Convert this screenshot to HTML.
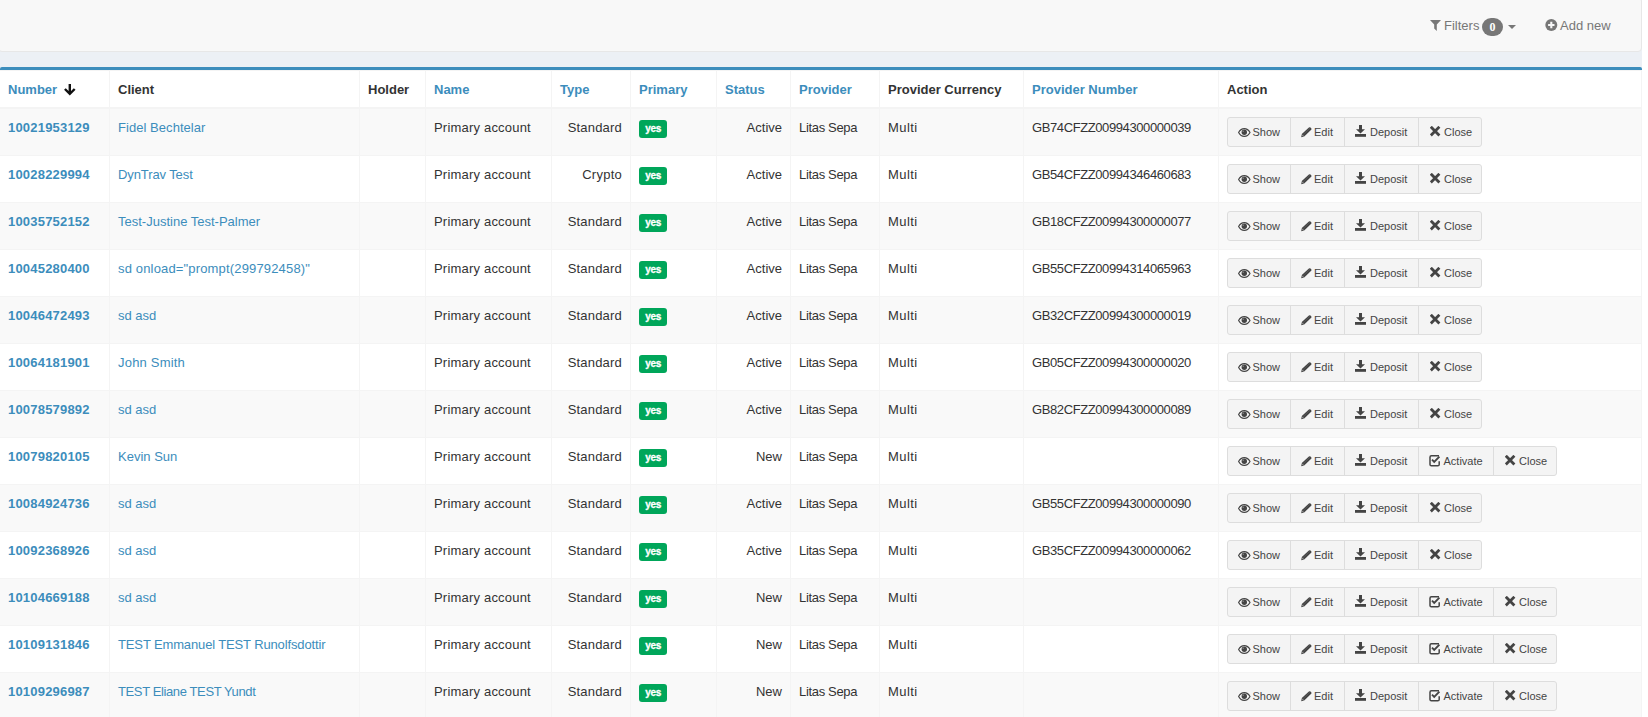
<!DOCTYPE html>
<html><head><meta charset="utf-8"><style>
*{box-sizing:border-box}
html,body{margin:0;padding:0}
body{width:1648px;height:717px;overflow:hidden;position:relative;background:#fff;font-family:"Liberation Sans",sans-serif;font-size:13px;color:#333}
.page{position:absolute;left:0;top:0;width:1642px;height:717px;background:#ecf0f5}
.nav{position:absolute;left:-2px;top:-3px;width:1644px;height:55px;background:#f8f8f8;border:1px solid #e7e7e7;border-radius:4px}
.nl{position:absolute;height:20px;line-height:20px;color:#777;font-size:13px;white-space:nowrap}
.badge{position:absolute;background:#777;color:#fff;border-radius:9px;font-family:"Liberation Serif",serif;font-weight:bold;font-size:12px;text-align:center}
.box{position:absolute;left:0;top:67px;width:1642px;height:660px;background:#fff;border-top:3px solid #3c8dbc;border-radius:2px}
table{position:absolute;left:0;top:70px;border-collapse:separate;border-spacing:0;table-layout:fixed;width:1642px}
td,th{padding:9px 8px 7px;line-height:20px;vertical-align:top;text-align:left;border-right:1px solid #f4f4f4;border-bottom:1px solid #f4f4f4;white-space:nowrap;overflow:hidden}
th{height:39px;border-top:1px solid #f4f4f4;border-bottom:2px solid #f4f4f4;padding-top:9px;padding-bottom:7px;font-weight:bold;font-size:13px}
tr.r td{height:47px}
tr.odd td{background:#f9f9f9}
a{color:#3c8dbc;text-decoration:none}
td.num a{font-weight:bold;letter-spacing:0.2px}
td.pn{letter-spacing:-0.4px}
td.act{padding-top:8px;padding-bottom:8px}
.tr{text-align:right}
.lbl{display:inline-block;vertical-align:top;background:#00a65a;color:#fff;font-weight:bold;font-size:10px;line-height:10px;width:28px;text-align:center;padding:4px 0 4px;letter-spacing:-0.3px;text-indent:0.3px;-webkit-text-stroke:0.3px #fff;border-radius:3px;margin-top:2px}
.bgp{display:flex;height:30px}
.btn{display:block;position:relative;flex:none;height:30px;font-size:11px;color:#444;background:#f4f4f4;border:1px solid #ddd;margin-left:-1px}
.btn.bf{margin-left:0;border-radius:3px 0 0 3px}
.btn.bl{border-radius:0 3px 3px 0}
.btn i{position:absolute;display:block;line-height:0}
.btn i svg{display:block}
.btn b{position:absolute;top:5px;font-weight:normal;line-height:18px;white-space:nowrap}
</style></head><body>
<div class="page"></div>
<div class="nav"></div>

<svg style="position:absolute;left:1430px;top:20px" width="11" height="11" viewBox="0 0 11 11"><path d="M0 0H11L6.8 4.6V11L4.2 8.6V4.6Z" fill="#777"/></svg>
<div class="nl" style="left:1444px;top:16px">Filters</div>
<div class="badge" style="left:1482px;top:18px;width:21px;height:18px;line-height:18px">0</div>
<svg style="position:absolute;left:1508px;top:25px" width="8" height="4" viewBox="0 0 8 4"><path d="M0 0H8L4 4Z" fill="#777"/></svg>
<svg style="position:absolute;left:1545px;top:19px" width="13" height="13" viewBox="0 0 13 13"><circle cx="6.3" cy="6" r="6" fill="#777"/><path d="M6.3 2.8V9.2M3.1 6H9.5" stroke="#f8f8f8" stroke-width="2.1"/></svg>
<div class="nl" style="left:1560px;top:16px">Add new</div>
<div class="box"></div>
<table><colgroup><col style="width:110px"><col style="width:250px"><col style="width:66px"><col style="width:126px"><col style="width:79px"><col style="width:86px"><col style="width:74px"><col style="width:89px"><col style="width:144px"><col style="width:195px"><col style="width:423px"></colgroup>
<tr><th style=position:relative><a>Number</a><svg width="12" height="12" viewBox="0 0 12 12" style="position:absolute;left:64px;top:13px"><path d="M5.8 0V10M0.9 5L5.8 9.9L10.7 5" fill="none" stroke="#111" stroke-width="2.4"/></svg></th><th>Client</th><th>Holder</th><th><a>Name</a></th><th><a>Type</a></th><th><a>Primary</a></th><th><a>Status</a></th><th><a>Provider</a></th><th>Provider Currency</th><th><a>Provider Number</a></th><th>Action</th></tr>
<tr class="r odd"><td class="num"><a>10021953129</a></td><td><a><span style="letter-spacing:0.05px">Fidel Bechtelar</span></a></td><td></td><td><span style="letter-spacing:0.2px">Primary account</span></td><td class="tr"><span style="letter-spacing:0.2px">Standard</span></td><td><span class="lbl">yes</span></td><td class="tr">Active</td><td><span style="letter-spacing:-0.33px">Litas Sepa</span></td><td><span style="letter-spacing:0.45px">Multi</span></td><td class="pn">GB74CFZZ00994300000039</td><td class="act"><div class="bgp"><span class="btn bf" style="width:64px"><i style="left:9.8px;top:9.6px"><svg width="13" height="10" viewBox="0 0 13 10"><path d="M0.6 4.5C2.1 1.7 4.1 0.6 6.3 0.6S10.5 1.7 12 4.5C10.5 7.3 8.5 8.4 6.3 8.4S2.1 7.3 0.6 4.5Z" fill="none" stroke="#444" stroke-width="1.15"/><circle cx="6.3" cy="4.2" r="2.7" fill="#444"/><circle cx="5.2" cy="3.2" r="0.75" fill="#888"/></svg></i><b style="left:24.5px">Show</b></span><span class="btn" style="width:55px"><i style="left:9px;top:8px"><svg width="13" height="12" viewBox="0 0 13 12"><path d="M1.2 11.2L1.8 8.1L8.9 1.5Q9.7 0.8 10.5 1.5L11.2 2.2Q11.9 3 11.2 3.7L4.2 10.5Z" fill="#444"/><path d="M1.9 8.6L3.7 10.4" stroke="#f4f4f4" stroke-width="0.6"/><path d="M2.9 8.9L10 2.1" stroke="#666" stroke-width="0.5"/></svg></i><b style="left:23px">Edit</b></span><span class="btn" style="width:75px"><i style="left:10px;top:7px"><svg width="12" height="13" viewBox="0 0 12 13"><path d="M4 0H7V4.3H10L5.5 8.6L1 4.3H4Z" fill="#444"/><rect x="0" y="9" width="11" height="2.8" fill="#444"/></svg></i><b style="left:25px">Deposit</b></span><span class="btn bl" style="width:64px"><i style="left:10.9px;top:7.9px"><svg width="11" height="11" viewBox="0 0 11 11"><path d="M1.8 1.8L8.4 8.4M8.4 1.8L1.8 8.4" stroke="#444" stroke-width="2.8" stroke-linecap="square"/></svg></i><b style="left:25px">Close</b></span></div></td></tr>
<tr class="r"><td class="num"><a>10028229994</a></td><td><a><span style="letter-spacing:-0.1px">DynTrav Test</span></a></td><td></td><td><span style="letter-spacing:0.2px">Primary account</span></td><td class="tr"><span style="letter-spacing:0.25px">Crypto</span></td><td><span class="lbl">yes</span></td><td class="tr">Active</td><td><span style="letter-spacing:-0.33px">Litas Sepa</span></td><td><span style="letter-spacing:0.45px">Multi</span></td><td class="pn">GB54CFZZ00994346460683</td><td class="act"><div class="bgp"><span class="btn bf" style="width:64px"><i style="left:9.8px;top:9.6px"><svg width="13" height="10" viewBox="0 0 13 10"><path d="M0.6 4.5C2.1 1.7 4.1 0.6 6.3 0.6S10.5 1.7 12 4.5C10.5 7.3 8.5 8.4 6.3 8.4S2.1 7.3 0.6 4.5Z" fill="none" stroke="#444" stroke-width="1.15"/><circle cx="6.3" cy="4.2" r="2.7" fill="#444"/><circle cx="5.2" cy="3.2" r="0.75" fill="#888"/></svg></i><b style="left:24.5px">Show</b></span><span class="btn" style="width:55px"><i style="left:9px;top:8px"><svg width="13" height="12" viewBox="0 0 13 12"><path d="M1.2 11.2L1.8 8.1L8.9 1.5Q9.7 0.8 10.5 1.5L11.2 2.2Q11.9 3 11.2 3.7L4.2 10.5Z" fill="#444"/><path d="M1.9 8.6L3.7 10.4" stroke="#f4f4f4" stroke-width="0.6"/><path d="M2.9 8.9L10 2.1" stroke="#666" stroke-width="0.5"/></svg></i><b style="left:23px">Edit</b></span><span class="btn" style="width:75px"><i style="left:10px;top:7px"><svg width="12" height="13" viewBox="0 0 12 13"><path d="M4 0H7V4.3H10L5.5 8.6L1 4.3H4Z" fill="#444"/><rect x="0" y="9" width="11" height="2.8" fill="#444"/></svg></i><b style="left:25px">Deposit</b></span><span class="btn bl" style="width:64px"><i style="left:10.9px;top:7.9px"><svg width="11" height="11" viewBox="0 0 11 11"><path d="M1.8 1.8L8.4 8.4M8.4 1.8L1.8 8.4" stroke="#444" stroke-width="2.8" stroke-linecap="square"/></svg></i><b style="left:25px">Close</b></span></div></td></tr>
<tr class="r odd"><td class="num"><a>10035752152</a></td><td><a>Test-Justine Test-Palmer</a></td><td></td><td><span style="letter-spacing:0.2px">Primary account</span></td><td class="tr"><span style="letter-spacing:0.2px">Standard</span></td><td><span class="lbl">yes</span></td><td class="tr">Active</td><td><span style="letter-spacing:-0.33px">Litas Sepa</span></td><td><span style="letter-spacing:0.45px">Multi</span></td><td class="pn">GB18CFZZ00994300000077</td><td class="act"><div class="bgp"><span class="btn bf" style="width:64px"><i style="left:9.8px;top:9.6px"><svg width="13" height="10" viewBox="0 0 13 10"><path d="M0.6 4.5C2.1 1.7 4.1 0.6 6.3 0.6S10.5 1.7 12 4.5C10.5 7.3 8.5 8.4 6.3 8.4S2.1 7.3 0.6 4.5Z" fill="none" stroke="#444" stroke-width="1.15"/><circle cx="6.3" cy="4.2" r="2.7" fill="#444"/><circle cx="5.2" cy="3.2" r="0.75" fill="#888"/></svg></i><b style="left:24.5px">Show</b></span><span class="btn" style="width:55px"><i style="left:9px;top:8px"><svg width="13" height="12" viewBox="0 0 13 12"><path d="M1.2 11.2L1.8 8.1L8.9 1.5Q9.7 0.8 10.5 1.5L11.2 2.2Q11.9 3 11.2 3.7L4.2 10.5Z" fill="#444"/><path d="M1.9 8.6L3.7 10.4" stroke="#f4f4f4" stroke-width="0.6"/><path d="M2.9 8.9L10 2.1" stroke="#666" stroke-width="0.5"/></svg></i><b style="left:23px">Edit</b></span><span class="btn" style="width:75px"><i style="left:10px;top:7px"><svg width="12" height="13" viewBox="0 0 12 13"><path d="M4 0H7V4.3H10L5.5 8.6L1 4.3H4Z" fill="#444"/><rect x="0" y="9" width="11" height="2.8" fill="#444"/></svg></i><b style="left:25px">Deposit</b></span><span class="btn bl" style="width:64px"><i style="left:10.9px;top:7.9px"><svg width="11" height="11" viewBox="0 0 11 11"><path d="M1.8 1.8L8.4 8.4M8.4 1.8L1.8 8.4" stroke="#444" stroke-width="2.8" stroke-linecap="square"/></svg></i><b style="left:25px">Close</b></span></div></td></tr>
<tr class="r"><td class="num"><a>10045280400</a></td><td><a><span style="letter-spacing:0.16px">sd onload=&quot;prompt(299792458)&quot;</span></a></td><td></td><td><span style="letter-spacing:0.2px">Primary account</span></td><td class="tr"><span style="letter-spacing:0.2px">Standard</span></td><td><span class="lbl">yes</span></td><td class="tr">Active</td><td><span style="letter-spacing:-0.33px">Litas Sepa</span></td><td><span style="letter-spacing:0.45px">Multi</span></td><td class="pn">GB55CFZZ00994314065963</td><td class="act"><div class="bgp"><span class="btn bf" style="width:64px"><i style="left:9.8px;top:9.6px"><svg width="13" height="10" viewBox="0 0 13 10"><path d="M0.6 4.5C2.1 1.7 4.1 0.6 6.3 0.6S10.5 1.7 12 4.5C10.5 7.3 8.5 8.4 6.3 8.4S2.1 7.3 0.6 4.5Z" fill="none" stroke="#444" stroke-width="1.15"/><circle cx="6.3" cy="4.2" r="2.7" fill="#444"/><circle cx="5.2" cy="3.2" r="0.75" fill="#888"/></svg></i><b style="left:24.5px">Show</b></span><span class="btn" style="width:55px"><i style="left:9px;top:8px"><svg width="13" height="12" viewBox="0 0 13 12"><path d="M1.2 11.2L1.8 8.1L8.9 1.5Q9.7 0.8 10.5 1.5L11.2 2.2Q11.9 3 11.2 3.7L4.2 10.5Z" fill="#444"/><path d="M1.9 8.6L3.7 10.4" stroke="#f4f4f4" stroke-width="0.6"/><path d="M2.9 8.9L10 2.1" stroke="#666" stroke-width="0.5"/></svg></i><b style="left:23px">Edit</b></span><span class="btn" style="width:75px"><i style="left:10px;top:7px"><svg width="12" height="13" viewBox="0 0 12 13"><path d="M4 0H7V4.3H10L5.5 8.6L1 4.3H4Z" fill="#444"/><rect x="0" y="9" width="11" height="2.8" fill="#444"/></svg></i><b style="left:25px">Deposit</b></span><span class="btn bl" style="width:64px"><i style="left:10.9px;top:7.9px"><svg width="11" height="11" viewBox="0 0 11 11"><path d="M1.8 1.8L8.4 8.4M8.4 1.8L1.8 8.4" stroke="#444" stroke-width="2.8" stroke-linecap="square"/></svg></i><b style="left:25px">Close</b></span></div></td></tr>
<tr class="r odd"><td class="num"><a>10046472493</a></td><td><a>sd asd</a></td><td></td><td><span style="letter-spacing:0.2px">Primary account</span></td><td class="tr"><span style="letter-spacing:0.2px">Standard</span></td><td><span class="lbl">yes</span></td><td class="tr">Active</td><td><span style="letter-spacing:-0.33px">Litas Sepa</span></td><td><span style="letter-spacing:0.45px">Multi</span></td><td class="pn">GB32CFZZ00994300000019</td><td class="act"><div class="bgp"><span class="btn bf" style="width:64px"><i style="left:9.8px;top:9.6px"><svg width="13" height="10" viewBox="0 0 13 10"><path d="M0.6 4.5C2.1 1.7 4.1 0.6 6.3 0.6S10.5 1.7 12 4.5C10.5 7.3 8.5 8.4 6.3 8.4S2.1 7.3 0.6 4.5Z" fill="none" stroke="#444" stroke-width="1.15"/><circle cx="6.3" cy="4.2" r="2.7" fill="#444"/><circle cx="5.2" cy="3.2" r="0.75" fill="#888"/></svg></i><b style="left:24.5px">Show</b></span><span class="btn" style="width:55px"><i style="left:9px;top:8px"><svg width="13" height="12" viewBox="0 0 13 12"><path d="M1.2 11.2L1.8 8.1L8.9 1.5Q9.7 0.8 10.5 1.5L11.2 2.2Q11.9 3 11.2 3.7L4.2 10.5Z" fill="#444"/><path d="M1.9 8.6L3.7 10.4" stroke="#f4f4f4" stroke-width="0.6"/><path d="M2.9 8.9L10 2.1" stroke="#666" stroke-width="0.5"/></svg></i><b style="left:23px">Edit</b></span><span class="btn" style="width:75px"><i style="left:10px;top:7px"><svg width="12" height="13" viewBox="0 0 12 13"><path d="M4 0H7V4.3H10L5.5 8.6L1 4.3H4Z" fill="#444"/><rect x="0" y="9" width="11" height="2.8" fill="#444"/></svg></i><b style="left:25px">Deposit</b></span><span class="btn bl" style="width:64px"><i style="left:10.9px;top:7.9px"><svg width="11" height="11" viewBox="0 0 11 11"><path d="M1.8 1.8L8.4 8.4M8.4 1.8L1.8 8.4" stroke="#444" stroke-width="2.8" stroke-linecap="square"/></svg></i><b style="left:25px">Close</b></span></div></td></tr>
<tr class="r"><td class="num"><a>10064181901</a></td><td><a><span style="letter-spacing:0.2px">John Smith</span></a></td><td></td><td><span style="letter-spacing:0.2px">Primary account</span></td><td class="tr"><span style="letter-spacing:0.2px">Standard</span></td><td><span class="lbl">yes</span></td><td class="tr">Active</td><td><span style="letter-spacing:-0.33px">Litas Sepa</span></td><td><span style="letter-spacing:0.45px">Multi</span></td><td class="pn">GB05CFZZ00994300000020</td><td class="act"><div class="bgp"><span class="btn bf" style="width:64px"><i style="left:9.8px;top:9.6px"><svg width="13" height="10" viewBox="0 0 13 10"><path d="M0.6 4.5C2.1 1.7 4.1 0.6 6.3 0.6S10.5 1.7 12 4.5C10.5 7.3 8.5 8.4 6.3 8.4S2.1 7.3 0.6 4.5Z" fill="none" stroke="#444" stroke-width="1.15"/><circle cx="6.3" cy="4.2" r="2.7" fill="#444"/><circle cx="5.2" cy="3.2" r="0.75" fill="#888"/></svg></i><b style="left:24.5px">Show</b></span><span class="btn" style="width:55px"><i style="left:9px;top:8px"><svg width="13" height="12" viewBox="0 0 13 12"><path d="M1.2 11.2L1.8 8.1L8.9 1.5Q9.7 0.8 10.5 1.5L11.2 2.2Q11.9 3 11.2 3.7L4.2 10.5Z" fill="#444"/><path d="M1.9 8.6L3.7 10.4" stroke="#f4f4f4" stroke-width="0.6"/><path d="M2.9 8.9L10 2.1" stroke="#666" stroke-width="0.5"/></svg></i><b style="left:23px">Edit</b></span><span class="btn" style="width:75px"><i style="left:10px;top:7px"><svg width="12" height="13" viewBox="0 0 12 13"><path d="M4 0H7V4.3H10L5.5 8.6L1 4.3H4Z" fill="#444"/><rect x="0" y="9" width="11" height="2.8" fill="#444"/></svg></i><b style="left:25px">Deposit</b></span><span class="btn bl" style="width:64px"><i style="left:10.9px;top:7.9px"><svg width="11" height="11" viewBox="0 0 11 11"><path d="M1.8 1.8L8.4 8.4M8.4 1.8L1.8 8.4" stroke="#444" stroke-width="2.8" stroke-linecap="square"/></svg></i><b style="left:25px">Close</b></span></div></td></tr>
<tr class="r odd"><td class="num"><a>10078579892</a></td><td><a>sd asd</a></td><td></td><td><span style="letter-spacing:0.2px">Primary account</span></td><td class="tr"><span style="letter-spacing:0.2px">Standard</span></td><td><span class="lbl">yes</span></td><td class="tr">Active</td><td><span style="letter-spacing:-0.33px">Litas Sepa</span></td><td><span style="letter-spacing:0.45px">Multi</span></td><td class="pn">GB82CFZZ00994300000089</td><td class="act"><div class="bgp"><span class="btn bf" style="width:64px"><i style="left:9.8px;top:9.6px"><svg width="13" height="10" viewBox="0 0 13 10"><path d="M0.6 4.5C2.1 1.7 4.1 0.6 6.3 0.6S10.5 1.7 12 4.5C10.5 7.3 8.5 8.4 6.3 8.4S2.1 7.3 0.6 4.5Z" fill="none" stroke="#444" stroke-width="1.15"/><circle cx="6.3" cy="4.2" r="2.7" fill="#444"/><circle cx="5.2" cy="3.2" r="0.75" fill="#888"/></svg></i><b style="left:24.5px">Show</b></span><span class="btn" style="width:55px"><i style="left:9px;top:8px"><svg width="13" height="12" viewBox="0 0 13 12"><path d="M1.2 11.2L1.8 8.1L8.9 1.5Q9.7 0.8 10.5 1.5L11.2 2.2Q11.9 3 11.2 3.7L4.2 10.5Z" fill="#444"/><path d="M1.9 8.6L3.7 10.4" stroke="#f4f4f4" stroke-width="0.6"/><path d="M2.9 8.9L10 2.1" stroke="#666" stroke-width="0.5"/></svg></i><b style="left:23px">Edit</b></span><span class="btn" style="width:75px"><i style="left:10px;top:7px"><svg width="12" height="13" viewBox="0 0 12 13"><path d="M4 0H7V4.3H10L5.5 8.6L1 4.3H4Z" fill="#444"/><rect x="0" y="9" width="11" height="2.8" fill="#444"/></svg></i><b style="left:25px">Deposit</b></span><span class="btn bl" style="width:64px"><i style="left:10.9px;top:7.9px"><svg width="11" height="11" viewBox="0 0 11 11"><path d="M1.8 1.8L8.4 8.4M8.4 1.8L1.8 8.4" stroke="#444" stroke-width="2.8" stroke-linecap="square"/></svg></i><b style="left:25px">Close</b></span></div></td></tr>
<tr class="r"><td class="num"><a>10079820105</a></td><td><a>Kevin Sun</a></td><td></td><td><span style="letter-spacing:0.2px">Primary account</span></td><td class="tr"><span style="letter-spacing:0.2px">Standard</span></td><td><span class="lbl">yes</span></td><td class="tr">New</td><td><span style="letter-spacing:-0.33px">Litas Sepa</span></td><td><span style="letter-spacing:0.45px">Multi</span></td><td class="pn"></td><td class="act"><div class="bgp"><span class="btn bf" style="width:64px"><i style="left:9.8px;top:9.6px"><svg width="13" height="10" viewBox="0 0 13 10"><path d="M0.6 4.5C2.1 1.7 4.1 0.6 6.3 0.6S10.5 1.7 12 4.5C10.5 7.3 8.5 8.4 6.3 8.4S2.1 7.3 0.6 4.5Z" fill="none" stroke="#444" stroke-width="1.15"/><circle cx="6.3" cy="4.2" r="2.7" fill="#444"/><circle cx="5.2" cy="3.2" r="0.75" fill="#888"/></svg></i><b style="left:24.5px">Show</b></span><span class="btn" style="width:55px"><i style="left:9px;top:8px"><svg width="13" height="12" viewBox="0 0 13 12"><path d="M1.2 11.2L1.8 8.1L8.9 1.5Q9.7 0.8 10.5 1.5L11.2 2.2Q11.9 3 11.2 3.7L4.2 10.5Z" fill="#444"/><path d="M1.9 8.6L3.7 10.4" stroke="#f4f4f4" stroke-width="0.6"/><path d="M2.9 8.9L10 2.1" stroke="#666" stroke-width="0.5"/></svg></i><b style="left:23px">Edit</b></span><span class="btn" style="width:75px"><i style="left:10px;top:7px"><svg width="12" height="13" viewBox="0 0 12 13"><path d="M4 0H7V4.3H10L5.5 8.6L1 4.3H4Z" fill="#444"/><rect x="0" y="9" width="11" height="2.8" fill="#444"/></svg></i><b style="left:25px">Deposit</b></span><span class="btn" style="width:76px"><i style="left:10px;top:8px"><svg width="13" height="12" viewBox="0 0 13 12"><path d="M10 0.8H2.4Q1 0.8 1 2.2V9.4Q1 10.8 2.4 10.8H8.8Q10.2 10.8 10.2 9.4V6.2" fill="none" stroke="#444" stroke-width="1.5"/><path d="M3 4.6L5.2 6.8L10.4 1.6" fill="none" stroke="#444" stroke-width="1.9"/></svg></i><b style="left:24.5px">Activate</b></span><span class="btn bl" style="width:64px"><i style="left:10.9px;top:7.9px"><svg width="11" height="11" viewBox="0 0 11 11"><path d="M1.8 1.8L8.4 8.4M8.4 1.8L1.8 8.4" stroke="#444" stroke-width="2.8" stroke-linecap="square"/></svg></i><b style="left:25px">Close</b></span></div></td></tr>
<tr class="r odd"><td class="num"><a>10084924736</a></td><td><a>sd asd</a></td><td></td><td><span style="letter-spacing:0.2px">Primary account</span></td><td class="tr"><span style="letter-spacing:0.2px">Standard</span></td><td><span class="lbl">yes</span></td><td class="tr">Active</td><td><span style="letter-spacing:-0.33px">Litas Sepa</span></td><td><span style="letter-spacing:0.45px">Multi</span></td><td class="pn">GB55CFZZ00994300000090</td><td class="act"><div class="bgp"><span class="btn bf" style="width:64px"><i style="left:9.8px;top:9.6px"><svg width="13" height="10" viewBox="0 0 13 10"><path d="M0.6 4.5C2.1 1.7 4.1 0.6 6.3 0.6S10.5 1.7 12 4.5C10.5 7.3 8.5 8.4 6.3 8.4S2.1 7.3 0.6 4.5Z" fill="none" stroke="#444" stroke-width="1.15"/><circle cx="6.3" cy="4.2" r="2.7" fill="#444"/><circle cx="5.2" cy="3.2" r="0.75" fill="#888"/></svg></i><b style="left:24.5px">Show</b></span><span class="btn" style="width:55px"><i style="left:9px;top:8px"><svg width="13" height="12" viewBox="0 0 13 12"><path d="M1.2 11.2L1.8 8.1L8.9 1.5Q9.7 0.8 10.5 1.5L11.2 2.2Q11.9 3 11.2 3.7L4.2 10.5Z" fill="#444"/><path d="M1.9 8.6L3.7 10.4" stroke="#f4f4f4" stroke-width="0.6"/><path d="M2.9 8.9L10 2.1" stroke="#666" stroke-width="0.5"/></svg></i><b style="left:23px">Edit</b></span><span class="btn" style="width:75px"><i style="left:10px;top:7px"><svg width="12" height="13" viewBox="0 0 12 13"><path d="M4 0H7V4.3H10L5.5 8.6L1 4.3H4Z" fill="#444"/><rect x="0" y="9" width="11" height="2.8" fill="#444"/></svg></i><b style="left:25px">Deposit</b></span><span class="btn bl" style="width:64px"><i style="left:10.9px;top:7.9px"><svg width="11" height="11" viewBox="0 0 11 11"><path d="M1.8 1.8L8.4 8.4M8.4 1.8L1.8 8.4" stroke="#444" stroke-width="2.8" stroke-linecap="square"/></svg></i><b style="left:25px">Close</b></span></div></td></tr>
<tr class="r"><td class="num"><a>10092368926</a></td><td><a>sd asd</a></td><td></td><td><span style="letter-spacing:0.2px">Primary account</span></td><td class="tr"><span style="letter-spacing:0.2px">Standard</span></td><td><span class="lbl">yes</span></td><td class="tr">Active</td><td><span style="letter-spacing:-0.33px">Litas Sepa</span></td><td><span style="letter-spacing:0.45px">Multi</span></td><td class="pn">GB35CFZZ00994300000062</td><td class="act"><div class="bgp"><span class="btn bf" style="width:64px"><i style="left:9.8px;top:9.6px"><svg width="13" height="10" viewBox="0 0 13 10"><path d="M0.6 4.5C2.1 1.7 4.1 0.6 6.3 0.6S10.5 1.7 12 4.5C10.5 7.3 8.5 8.4 6.3 8.4S2.1 7.3 0.6 4.5Z" fill="none" stroke="#444" stroke-width="1.15"/><circle cx="6.3" cy="4.2" r="2.7" fill="#444"/><circle cx="5.2" cy="3.2" r="0.75" fill="#888"/></svg></i><b style="left:24.5px">Show</b></span><span class="btn" style="width:55px"><i style="left:9px;top:8px"><svg width="13" height="12" viewBox="0 0 13 12"><path d="M1.2 11.2L1.8 8.1L8.9 1.5Q9.7 0.8 10.5 1.5L11.2 2.2Q11.9 3 11.2 3.7L4.2 10.5Z" fill="#444"/><path d="M1.9 8.6L3.7 10.4" stroke="#f4f4f4" stroke-width="0.6"/><path d="M2.9 8.9L10 2.1" stroke="#666" stroke-width="0.5"/></svg></i><b style="left:23px">Edit</b></span><span class="btn" style="width:75px"><i style="left:10px;top:7px"><svg width="12" height="13" viewBox="0 0 12 13"><path d="M4 0H7V4.3H10L5.5 8.6L1 4.3H4Z" fill="#444"/><rect x="0" y="9" width="11" height="2.8" fill="#444"/></svg></i><b style="left:25px">Deposit</b></span><span class="btn bl" style="width:64px"><i style="left:10.9px;top:7.9px"><svg width="11" height="11" viewBox="0 0 11 11"><path d="M1.8 1.8L8.4 8.4M8.4 1.8L1.8 8.4" stroke="#444" stroke-width="2.8" stroke-linecap="square"/></svg></i><b style="left:25px">Close</b></span></div></td></tr>
<tr class="r odd"><td class="num"><a>10104669188</a></td><td><a>sd asd</a></td><td></td><td><span style="letter-spacing:0.2px">Primary account</span></td><td class="tr"><span style="letter-spacing:0.2px">Standard</span></td><td><span class="lbl">yes</span></td><td class="tr">New</td><td><span style="letter-spacing:-0.33px">Litas Sepa</span></td><td><span style="letter-spacing:0.45px">Multi</span></td><td class="pn"></td><td class="act"><div class="bgp"><span class="btn bf" style="width:64px"><i style="left:9.8px;top:9.6px"><svg width="13" height="10" viewBox="0 0 13 10"><path d="M0.6 4.5C2.1 1.7 4.1 0.6 6.3 0.6S10.5 1.7 12 4.5C10.5 7.3 8.5 8.4 6.3 8.4S2.1 7.3 0.6 4.5Z" fill="none" stroke="#444" stroke-width="1.15"/><circle cx="6.3" cy="4.2" r="2.7" fill="#444"/><circle cx="5.2" cy="3.2" r="0.75" fill="#888"/></svg></i><b style="left:24.5px">Show</b></span><span class="btn" style="width:55px"><i style="left:9px;top:8px"><svg width="13" height="12" viewBox="0 0 13 12"><path d="M1.2 11.2L1.8 8.1L8.9 1.5Q9.7 0.8 10.5 1.5L11.2 2.2Q11.9 3 11.2 3.7L4.2 10.5Z" fill="#444"/><path d="M1.9 8.6L3.7 10.4" stroke="#f4f4f4" stroke-width="0.6"/><path d="M2.9 8.9L10 2.1" stroke="#666" stroke-width="0.5"/></svg></i><b style="left:23px">Edit</b></span><span class="btn" style="width:75px"><i style="left:10px;top:7px"><svg width="12" height="13" viewBox="0 0 12 13"><path d="M4 0H7V4.3H10L5.5 8.6L1 4.3H4Z" fill="#444"/><rect x="0" y="9" width="11" height="2.8" fill="#444"/></svg></i><b style="left:25px">Deposit</b></span><span class="btn" style="width:76px"><i style="left:10px;top:8px"><svg width="13" height="12" viewBox="0 0 13 12"><path d="M10 0.8H2.4Q1 0.8 1 2.2V9.4Q1 10.8 2.4 10.8H8.8Q10.2 10.8 10.2 9.4V6.2" fill="none" stroke="#444" stroke-width="1.5"/><path d="M3 4.6L5.2 6.8L10.4 1.6" fill="none" stroke="#444" stroke-width="1.9"/></svg></i><b style="left:24.5px">Activate</b></span><span class="btn bl" style="width:64px"><i style="left:10.9px;top:7.9px"><svg width="11" height="11" viewBox="0 0 11 11"><path d="M1.8 1.8L8.4 8.4M8.4 1.8L1.8 8.4" stroke="#444" stroke-width="2.8" stroke-linecap="square"/></svg></i><b style="left:25px">Close</b></span></div></td></tr>
<tr class="r"><td class="num"><a>10109131846</a></td><td><a><span style="letter-spacing:-0.135px">TEST Emmanuel TEST Runolfsdottir</span></a></td><td></td><td><span style="letter-spacing:0.2px">Primary account</span></td><td class="tr"><span style="letter-spacing:0.2px">Standard</span></td><td><span class="lbl">yes</span></td><td class="tr">New</td><td><span style="letter-spacing:-0.33px">Litas Sepa</span></td><td><span style="letter-spacing:0.45px">Multi</span></td><td class="pn"></td><td class="act"><div class="bgp"><span class="btn bf" style="width:64px"><i style="left:9.8px;top:9.6px"><svg width="13" height="10" viewBox="0 0 13 10"><path d="M0.6 4.5C2.1 1.7 4.1 0.6 6.3 0.6S10.5 1.7 12 4.5C10.5 7.3 8.5 8.4 6.3 8.4S2.1 7.3 0.6 4.5Z" fill="none" stroke="#444" stroke-width="1.15"/><circle cx="6.3" cy="4.2" r="2.7" fill="#444"/><circle cx="5.2" cy="3.2" r="0.75" fill="#888"/></svg></i><b style="left:24.5px">Show</b></span><span class="btn" style="width:55px"><i style="left:9px;top:8px"><svg width="13" height="12" viewBox="0 0 13 12"><path d="M1.2 11.2L1.8 8.1L8.9 1.5Q9.7 0.8 10.5 1.5L11.2 2.2Q11.9 3 11.2 3.7L4.2 10.5Z" fill="#444"/><path d="M1.9 8.6L3.7 10.4" stroke="#f4f4f4" stroke-width="0.6"/><path d="M2.9 8.9L10 2.1" stroke="#666" stroke-width="0.5"/></svg></i><b style="left:23px">Edit</b></span><span class="btn" style="width:75px"><i style="left:10px;top:7px"><svg width="12" height="13" viewBox="0 0 12 13"><path d="M4 0H7V4.3H10L5.5 8.6L1 4.3H4Z" fill="#444"/><rect x="0" y="9" width="11" height="2.8" fill="#444"/></svg></i><b style="left:25px">Deposit</b></span><span class="btn" style="width:76px"><i style="left:10px;top:8px"><svg width="13" height="12" viewBox="0 0 13 12"><path d="M10 0.8H2.4Q1 0.8 1 2.2V9.4Q1 10.8 2.4 10.8H8.8Q10.2 10.8 10.2 9.4V6.2" fill="none" stroke="#444" stroke-width="1.5"/><path d="M3 4.6L5.2 6.8L10.4 1.6" fill="none" stroke="#444" stroke-width="1.9"/></svg></i><b style="left:24.5px">Activate</b></span><span class="btn bl" style="width:64px"><i style="left:10.9px;top:7.9px"><svg width="11" height="11" viewBox="0 0 11 11"><path d="M1.8 1.8L8.4 8.4M8.4 1.8L1.8 8.4" stroke="#444" stroke-width="2.8" stroke-linecap="square"/></svg></i><b style="left:25px">Close</b></span></div></td></tr>
<tr class="r odd"><td class="num"><a>10109296987</a></td><td><a><span style="letter-spacing:-0.38px">TEST Eliane TEST Yundt</span></a></td><td></td><td><span style="letter-spacing:0.2px">Primary account</span></td><td class="tr"><span style="letter-spacing:0.2px">Standard</span></td><td><span class="lbl">yes</span></td><td class="tr">New</td><td><span style="letter-spacing:-0.33px">Litas Sepa</span></td><td><span style="letter-spacing:0.45px">Multi</span></td><td class="pn"></td><td class="act"><div class="bgp"><span class="btn bf" style="width:64px"><i style="left:9.8px;top:9.6px"><svg width="13" height="10" viewBox="0 0 13 10"><path d="M0.6 4.5C2.1 1.7 4.1 0.6 6.3 0.6S10.5 1.7 12 4.5C10.5 7.3 8.5 8.4 6.3 8.4S2.1 7.3 0.6 4.5Z" fill="none" stroke="#444" stroke-width="1.15"/><circle cx="6.3" cy="4.2" r="2.7" fill="#444"/><circle cx="5.2" cy="3.2" r="0.75" fill="#888"/></svg></i><b style="left:24.5px">Show</b></span><span class="btn" style="width:55px"><i style="left:9px;top:8px"><svg width="13" height="12" viewBox="0 0 13 12"><path d="M1.2 11.2L1.8 8.1L8.9 1.5Q9.7 0.8 10.5 1.5L11.2 2.2Q11.9 3 11.2 3.7L4.2 10.5Z" fill="#444"/><path d="M1.9 8.6L3.7 10.4" stroke="#f4f4f4" stroke-width="0.6"/><path d="M2.9 8.9L10 2.1" stroke="#666" stroke-width="0.5"/></svg></i><b style="left:23px">Edit</b></span><span class="btn" style="width:75px"><i style="left:10px;top:7px"><svg width="12" height="13" viewBox="0 0 12 13"><path d="M4 0H7V4.3H10L5.5 8.6L1 4.3H4Z" fill="#444"/><rect x="0" y="9" width="11" height="2.8" fill="#444"/></svg></i><b style="left:25px">Deposit</b></span><span class="btn" style="width:76px"><i style="left:10px;top:8px"><svg width="13" height="12" viewBox="0 0 13 12"><path d="M10 0.8H2.4Q1 0.8 1 2.2V9.4Q1 10.8 2.4 10.8H8.8Q10.2 10.8 10.2 9.4V6.2" fill="none" stroke="#444" stroke-width="1.5"/><path d="M3 4.6L5.2 6.8L10.4 1.6" fill="none" stroke="#444" stroke-width="1.9"/></svg></i><b style="left:24.5px">Activate</b></span><span class="btn bl" style="width:64px"><i style="left:10.9px;top:7.9px"><svg width="11" height="11" viewBox="0 0 11 11"><path d="M1.8 1.8L8.4 8.4M8.4 1.8L1.8 8.4" stroke="#444" stroke-width="2.8" stroke-linecap="square"/></svg></i><b style="left:25px">Close</b></span></div></td></tr>
</table>
</body></html>
